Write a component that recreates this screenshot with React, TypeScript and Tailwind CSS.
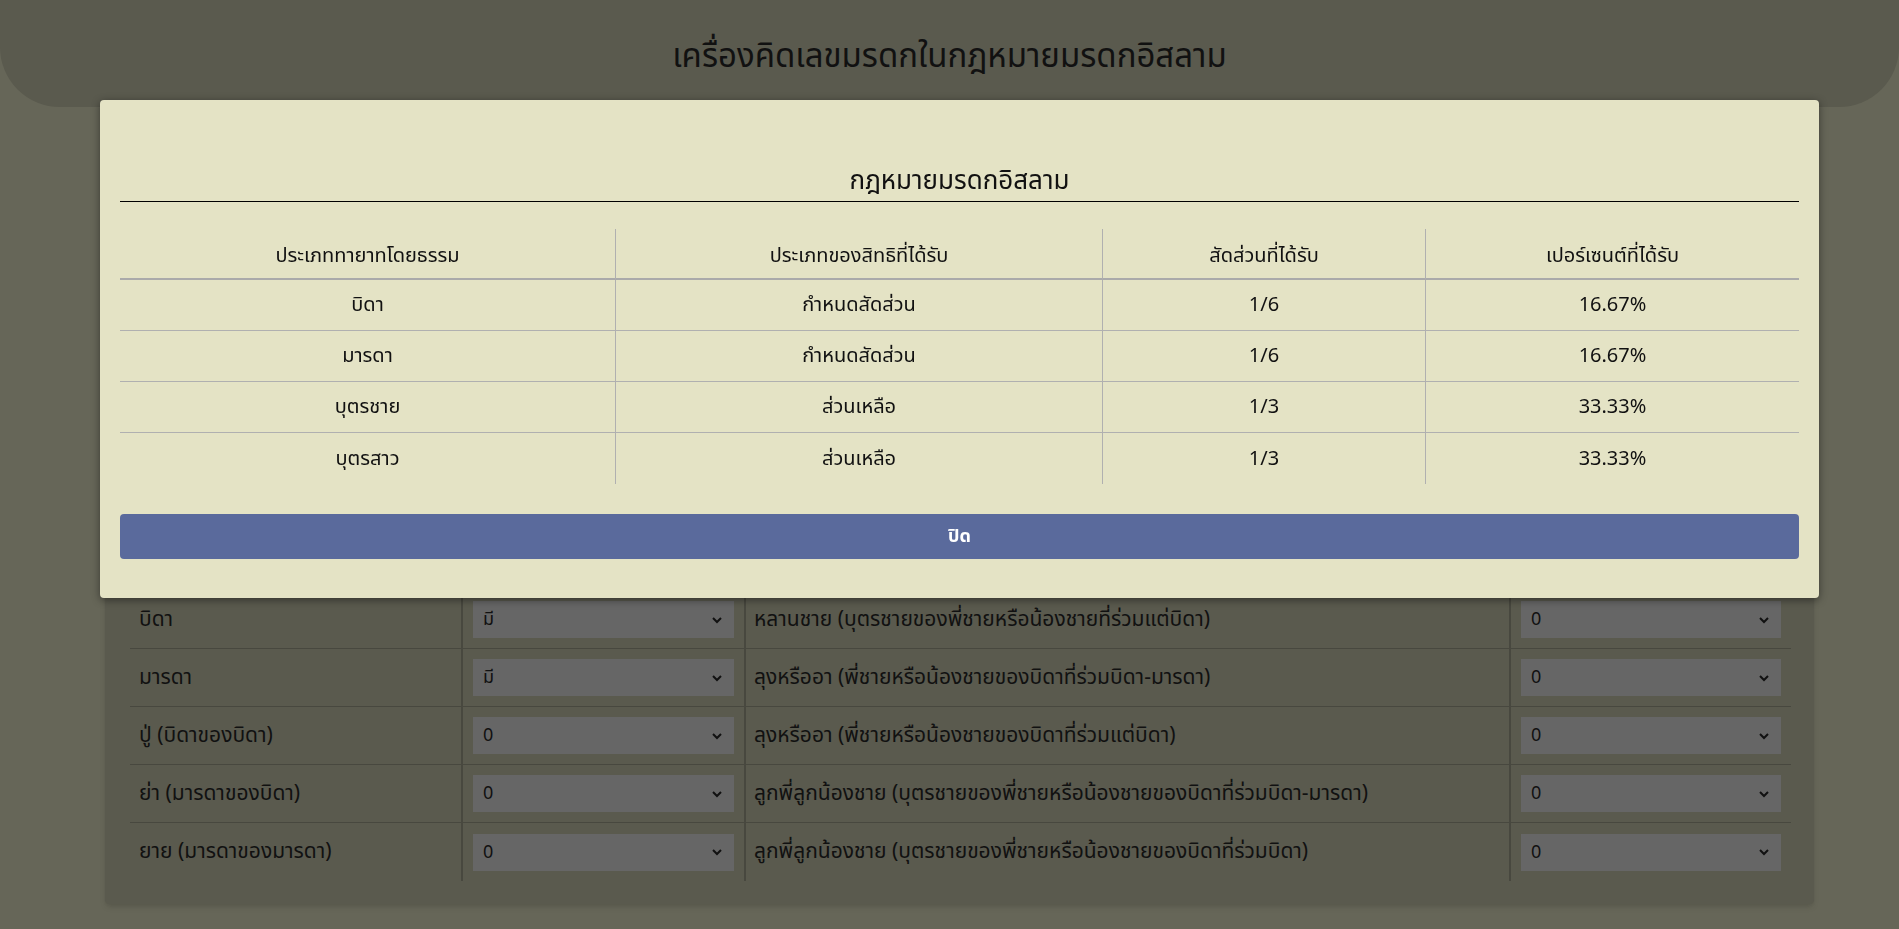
import React from 'react';

const FONT = { fontFamily: '"Noto Sans Thai", "Noto Sans", "Liberation Sans", sans-serif' };

type Heir = { left: string; leftValue: string; right: string; rightValue: string };

const heirs: Heir[] = [
  { left: 'สามี', leftValue: 'ไม่มี', right: 'พี่ชายหรือน้องชาย (ร่วมบิดา-มารดา)', rightValue: '0' },
  { left: 'ภรรยา', leftValue: '0', right: 'พี่สาวหรือน้องสาว (ร่วมบิดา-มารดา)', rightValue: '0' },
  { left: 'บุตรชาย', leftValue: '1', right: 'พี่ชายหรือน้องชาย (ร่วมแต่บิดา)', rightValue: '0' },
  { left: 'บุตรสาว', leftValue: '1', right: 'พี่สาวหรือน้องสาว (ร่วมแต่บิดา)', rightValue: '0' },
  { left: 'หลานชาย (บุตรชายของบุตรชาย)', leftValue: '0', right: 'พี่ชายหรือน้องชาย (ร่วมแต่มารดา)', rightValue: '0' },
  { left: 'หลานสาว (บุตรสาวของบุตรชาย)', leftValue: '0', right: 'พี่สาวหรือน้องสาว (ร่วมแต่มารดา)', rightValue: '0' },
  { left: 'ตา (บิดาของมารดา)', leftValue: '0', right: 'หลานชาย (บุตรชายของพี่ชายหรือน้องชายที่ร่วมบิดา-มารดา)', rightValue: '0' },
  { left: 'ทวด (บิดาของปู่)', leftValue: '0', right: 'หลานชาย (บุตรชายของพี่ชายหรือน้องชายที่ร่วมบิดา-มารดา)', rightValue: '0' },
  { left: 'บิดา', leftValue: 'มี', right: 'หลานชาย (บุตรชายของพี่ชายหรือน้องชายที่ร่วมแต่บิดา)', rightValue: '0' },
  { left: 'มารดา', leftValue: 'มี', right: 'ลุงหรืออา (พี่ชายหรือน้องชายของบิดาที่ร่วมบิดา-มารดา)', rightValue: '0' },
  { left: 'ปู่ (บิดาของบิดา)', leftValue: '0', right: 'ลุงหรืออา (พี่ชายหรือน้องชายของบิดาที่ร่วมแต่บิดา)', rightValue: '0' },
  { left: 'ย่า (มารดาของบิดา)', leftValue: '0', right: 'ลูกพี่ลูกน้องชาย (บุตรชายของพี่ชายหรือน้องชายของบิดาที่ร่วมบิดา-มารดา)', rightValue: '0' },
  { left: 'ยาย (มารดาของมารดา)', leftValue: '0', right: 'ลูกพี่ลูกน้องชาย (บุตรชายของพี่ชายหรือน้องชายของบิดาที่ร่วมบิดา)', rightValue: '0' },
];

const shares = [
  { heir: 'บิดา', type: 'กำหนดสัดส่วน', fraction: '1/6', percent: '16.67%' },
  { heir: 'มารดา', type: 'กำหนดสัดส่วน', fraction: '1/6', percent: '16.67%' },
  { heir: 'บุตรชาย', type: 'ส่วนเหลือ', fraction: '1/3', percent: '33.33%' },
  { heir: 'บุตรสาว', type: 'ส่วนเหลือ', fraction: '1/3', percent: '33.33%' },
];

const Chevron = () => (
  <svg width="14" height="14" viewBox="0 0 14 14" className="shrink-0">
    <path d="M3 5l4 4 4-4" fill="none" stroke="#111" strokeWidth="2" />
  </svg>
);

const FakeSelect = ({ value }: { value: string }) => (
  <div className="h-[37px] bg-[#666666] flex items-center justify-between pl-[10px] pr-[10px] text-[18px] text-[#111]">
    <span>{value}</span>
    <Chevron />
  </div>
);

const App: React.FC = () => {
  return (
    <div className="min-h-screen bg-[#666658] text-[#111] pb-[24px]" style={FONT}>
      <header className="h-[107px] bg-[#5a5a4e] rounded-b-[60px] flex items-center justify-center pt-[8px]">
        <h1 className="text-[33px] font-normal">เครื่องคิดเลขมรดกในกฎหมายมรดกอิสลาม</h1>
      </header>

      <div className="ml-[105px] w-[1709px] bg-[#5a5a4e] rounded-b-[4px] shadow-md px-[23px] pt-[21px] pb-[23px] -mt-[1px]">
        <div className="ml-[2px] grid grid-cols-[331px_283px_765px_282px]">
          {heirs.map((h, i) => (
            <React.Fragment key={i}>
              <div className={`h-[58px] flex items-center pl-[9px] text-[21px] ${i < heirs.length - 1 ? 'border-b border-[#48483f]' : ''}`}>
                {h.left}
              </div>
              <div className={`h-[58px] flex flex-col justify-center px-[10px] border-l-2 border-[#48483f] ${i < heirs.length - 1 ? 'border-b' : ''}`}>
                <FakeSelect value={h.leftValue} />
              </div>
              <div className={`h-[58px] flex items-center pl-[8px] text-[21px] border-l-2 border-[#48483f] ${i < heirs.length - 1 ? 'border-b' : ''}`}>
                {h.right}
              </div>
              <div className={`h-[58px] flex flex-col justify-center pl-[10px] pr-[10px] border-l-2 border-[#48483f] ${i < heirs.length - 1 ? 'border-b' : ''}`}>
                <FakeSelect value={h.rightValue} />
              </div>
            </React.Fragment>
          ))}
        </div>
      </div>

      <div className="fixed left-[100px] top-[100px] w-[1719px] h-[498px] bg-[#e4e3c5] rounded-[4px] shadow-[0_2px_8px_rgba(0,0,0,0.45)] px-[20px]">
        <div className="h-[102px] flex items-end justify-center pb-[0px] border-b border-black">
          <h2 className="text-[26px] font-normal">กฎหมายมรดกอิสลาม</h2>
        </div>

        <div className="mt-[27px] grid grid-cols-[495px_487px_323px_374px] text-[20px]">
          {['ประเภททายาทโดยธรรม', 'ประเภทของสิทธิที่ได้รับ', 'สัดส่วนที่ได้รับ', 'เปอร์เซนต์ที่ได้รับ'].map((t, i) => (
            <div
              key={t}
              className={`h-[51px] flex items-center justify-center pt-[4px] border-b-2 border-[#aaaaaa] ${i > 0 ? 'border-l border-l-[#b0b0b0]' : ''}`}
            >
              {t}
            </div>
          ))}
          {shares.map((s, r) => (
            <React.Fragment key={r}>
              {[s.heir, s.type, s.fraction, s.percent].map((c, i) => (
                <div
                  key={i}
                  className={`h-[51px] flex items-center justify-center ${r < shares.length - 1 ? 'border-b border-[#b0b0b0]' : ''} ${i > 0 ? 'border-l border-l-[#b0b0b0]' : ''}`}
                >
                  {c}
                </div>
              ))}
            </React.Fragment>
          ))}
        </div>

        <button className="mt-[30px] w-full h-[45px] bg-[#5a6a9c] rounded-[4px] text-white text-[18px] font-bold">
          ปิด
        </button>
      </div>
    </div>
  );
};

export default App;
